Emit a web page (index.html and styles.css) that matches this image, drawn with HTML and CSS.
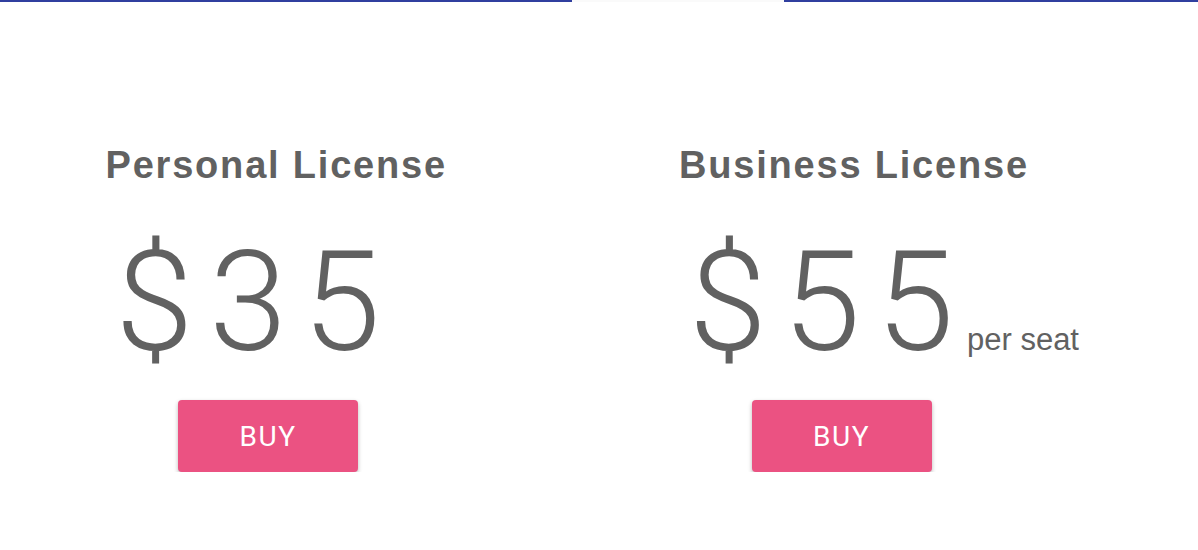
FILE: index.html
```html
<!DOCTYPE html>
<html lang="en">
<head>
<meta charset="utf-8">
<title>Licenses</title>
<link rel="stylesheet" href="styles.css">
</head>
<body>
<div class="topbar">
  <div class="seg seg-blue seg-left"></div>
  <div class="seg seg-light"></div>
  <div class="seg seg-blue seg-right"></div>
</div>
<main class="plans">
  <section class="plan">
    <h2 class="plan-title">Personal License</h2>
    <div class="price"><span class="amount">$35</span></div>
    <button class="buy">BUY</button>
  </section>
  <section class="plan">
    <h2 class="plan-title">Business License</h2>
    <div class="price"><span class="amount">$55</span><span class="unit">per seat</span></div>
    <button class="buy">BUY</button>
  </section>
</main>
</body>
</html>
```

FILE: styles.css
```css
html, body {
  margin: 0;
  padding: 0;
  background: #ffffff;
}

body {
  font-family: "Liberation Sans", Arial, sans-serif;
  color: #616161;
}

.topbar {
  display: flex;
  height: 2px;
}

.seg-left {
  width: 572px;
}

.seg-light {
  width: 212px;
  background: #fafafa;
}

.seg-right {
  flex: 1;
}

.seg-blue {
  background: #303f9f;
}

.plans {
  display: grid;
  grid-template-columns: 573.5px 573.5px;
  padding: 0 25.5px;
}

.plan {
  padding-left: 80px;
  padding-top: 141px;
}

.plan-title {
  margin: 0;
  font-size: 38px;
  line-height: 44px;
  font-weight: 700;
  letter-spacing: 1.8px;
  color: #616161;
}

.price {
  margin-top: 45px;
  margin-left: 10px;
  height: 140px;
  line-height: 140px;
  white-space: nowrap;
}

.amount {
  font-family: Roboto, "Liberation Sans", sans-serif;
  font-weight: 300;
  font-size: 140px;
  letter-spacing: 16px;
  color: #616161;
}

.unit {
  margin-left: -3px;
  font-size: 31px;
  color: #616161;
}

.buy {
  display: block;
  margin-top: 28px;
  margin-left: 72.5px;
  width: 180px;
  height: 72px;
  border: none;
  border-radius: 4px;
  background: #eb5282;
  color: #ffffff;
  font-family: Roboto, "Liberation Sans", sans-serif;
  font-size: 28px;
  font-weight: 400;
  letter-spacing: 1.5px;
  box-shadow: 0 2px 4px rgba(0, 0, 0, 0.28);
  cursor: pointer;
}
```
